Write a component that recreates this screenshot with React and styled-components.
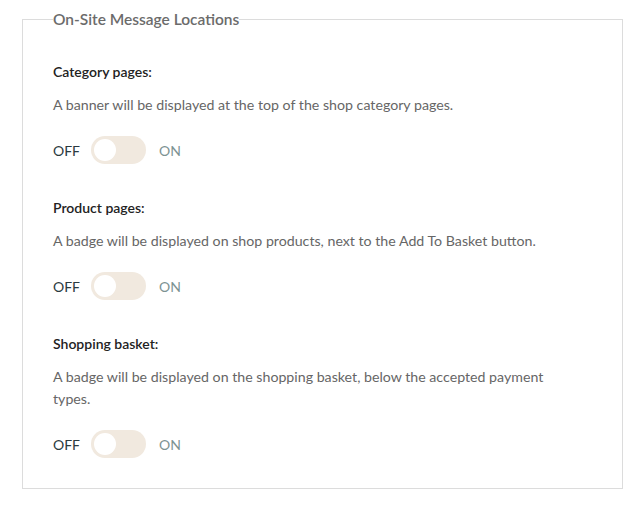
import React from "react";
import styled, { createGlobalStyle } from "styled-components";

const Global = createGlobalStyle`
  html, body { margin: 0; padding: 0; background: #fff; }
  body { font-family: "Lato", "Noto Sans", sans-serif; -webkit-font-smoothing: antialiased; }
`;

const Page = styled.div`
  padding: 9px 18px 0 22px;
`;

const Fieldset = styled.fieldset`
  margin: 0;
  width: 601px;
  box-sizing: border-box;
  border: 1px solid #dcdcdc;
  padding: 33px 30px 30px 30px;
  display: flex;
  flex-direction: column;
  gap: 34px;
`;

const Legend = styled.legend`
  padding: 0;
  font-size: 15.5px;
  line-height: 20px;
  font-weight: 600;
  color: #6b6b6b;
`;

const Section = styled.div`
  display: flex;
  flex-direction: column;
`;

const Title = styled.div`
  font-size: 14px;
  line-height: 20px;
  font-weight: 600;
  color: #222;
  margin-bottom: 12px;
`;

const Desc = styled.p`
  margin: 0 0 20px 0;
  font-size: 14.2px;
  line-height: 22px;
  color: #666;
  max-width: 520px;
`;

const ToggleRow = styled.div`
  display: flex;
  align-items: center;
  height: 28px;
`;

const Label = styled.span`
  font-size: 14px;
  color: ${(p) => (p.$active ? "#2b3a40" : "#7d9393")};
`;

const Track = styled.span`
  position: relative;
  width: 55px;
  height: 28px;
  margin: 0 13px 0 11px;
  border-radius: 14px;
  background: #f1e9df;
`;

const Knob = styled.span`
  position: absolute;
  top: 3px;
  left: 3px;
  width: 22px;
  height: 22px;
  border-radius: 50%;
  background: #fff;
`;

const items = [
  { title: "Category pages:", desc: "A banner will be displayed at the top of the shop category pages." },
  { title: "Product pages:", desc: "A badge will be displayed on shop products, next to the Add To Basket button." },
  { title: "Shopping basket:", desc: "A badge will be displayed on the shopping basket, below the accepted payment types." },
];

export default function App() {
  return (
    <Page>
      <Global />
      <Fieldset>
        <Legend>On-Site Message Locations</Legend>
        {items.map((it) => (
          <Section key={it.title}>
            <Title>{it.title}</Title>
            <Desc>{it.desc}</Desc>
            <ToggleRow>
              <Label $active>OFF</Label>
              <Track><Knob /></Track>
              <Label>ON</Label>
            </ToggleRow>
          </Section>
        ))}
      </Fieldset>
    </Page>
  );
}
